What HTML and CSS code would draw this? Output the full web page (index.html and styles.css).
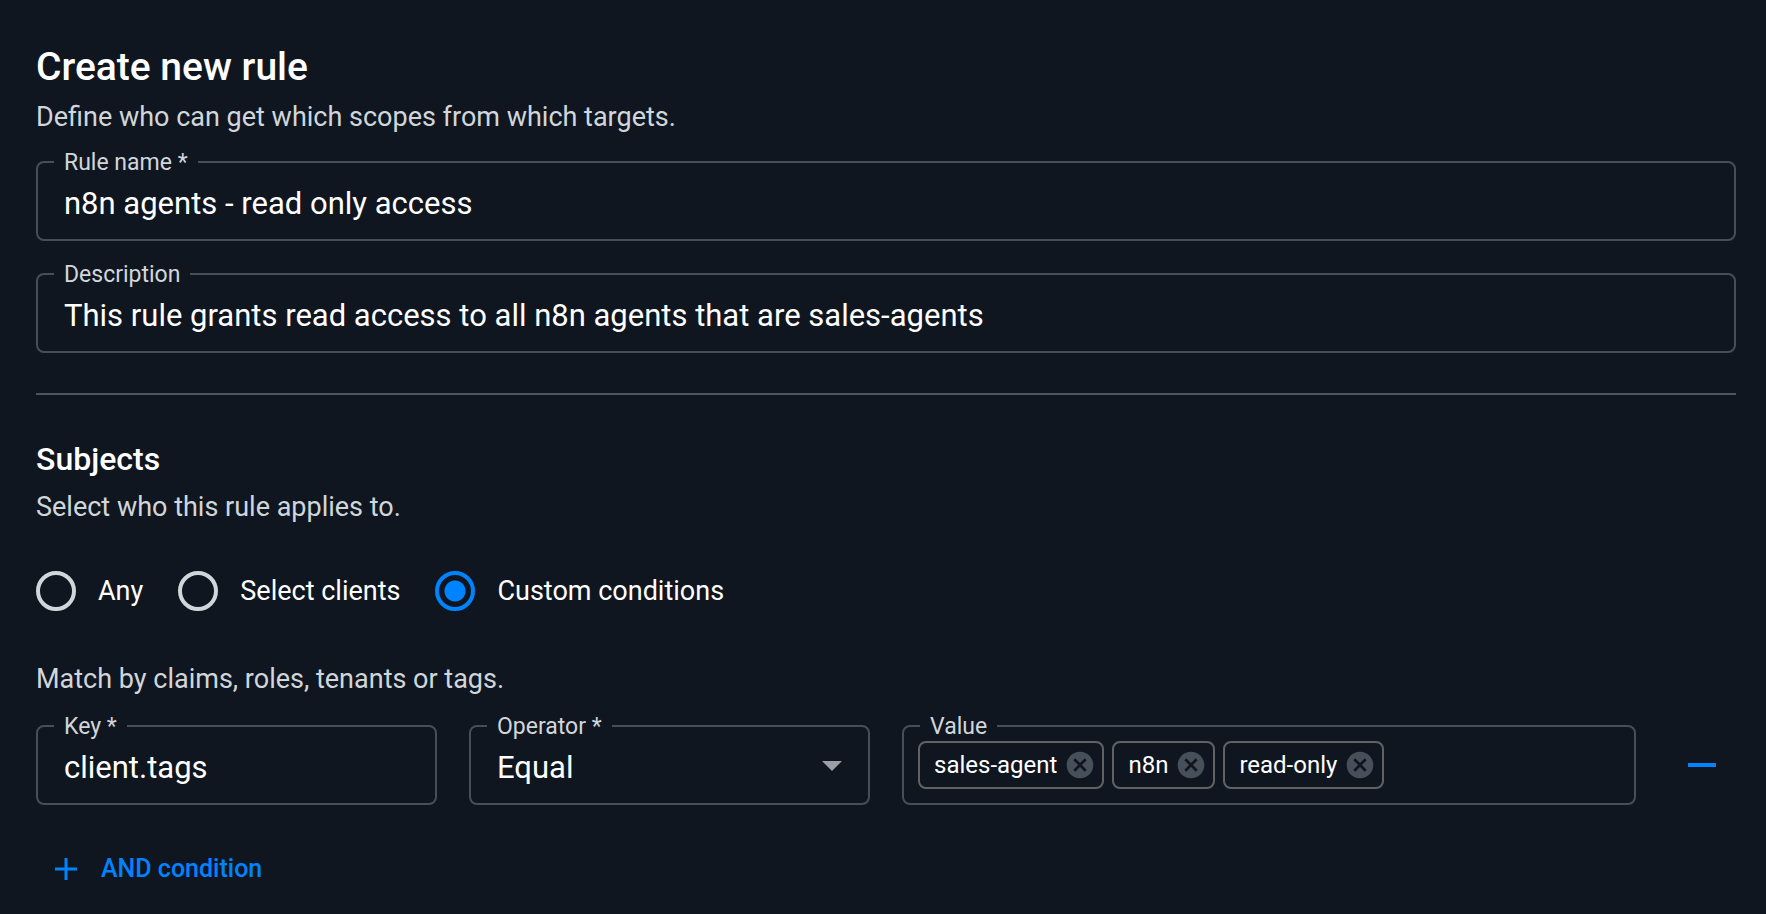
FILE: index.html
```html
<!DOCTYPE html>
<html lang="en">
<head>
<meta charset="utf-8">
<meta name="viewport" content="width=device-width, initial-scale=1">
<title>Create new rule</title>
<link rel="stylesheet" href="styles.css">
</head>
<body>
<main>
  <form class="rule-form">
    <header class="intro">
      <h1 class="title">Create new rule</h1>
      <p class="hint">Define who can get which scopes from which targets.</p>
    </header>

    <div class="fields">
      <div class="field">
        <label class="field-label" for="rule-name">Rule name *</label>
        <input class="field-control" id="rule-name" type="text" value="n8n agents - read only access" required>
      </div>
      <div class="field">
        <label class="field-label" for="description">Description</label>
        <input class="field-control" id="description" type="text" value="This rule grants read access to all n8n agents that are sales-agents">
      </div>
    </div>

    <hr class="divider">

    <section class="subjects">
      <h2 class="subtitle">Subjects</h2>
      <p class="hint">Select who this rule applies to.</p>

      <div class="radios" role="radiogroup" aria-label="Subjects">
        <label class="radio"><input class="radio-input" type="radio" name="subject">Any</label>
        <label class="radio"><input class="radio-input" type="radio" name="subject">Select clients</label>
        <label class="radio"><input class="radio-input" type="radio" name="subject" checked>Custom conditions</label>
      </div>

      <p class="hint">Match by claims, roles, tenants or tags.</p>

      <div class="condition">
        <div class="field">
          <label class="field-label" for="key">Key *</label>
          <input class="field-control" id="key" type="text" value="client.tags" required>
        </div>
        <div class="field">
          <label class="field-label" for="operator">Operator *</label>
          <select class="field-control" id="operator" required>
            <option selected>Equal</option>
          </select>
          <svg class="caret" viewBox="0 0 24 24" aria-hidden="true"><path d="M7 10l5 5 5-5z"/></svg>
        </div>
        <div class="field chips">
          <label class="field-label" for="value">Value</label>
          <span class="chip">sales-agent<button class="chip-remove" type="button" aria-label="Remove sales-agent"><svg class="chip-icon" viewBox="0 0 24 24"><path d="M12 2C6.47 2 2 6.47 2 12s4.47 10 10 10 10-4.47 10-10S17.53 2 12 2zm5 13.59L15.59 17 12 13.41 8.41 17 7 15.59 10.59 12 7 8.41 8.41 7 12 10.59 15.59 7 17 8.41 13.41 12 17 15.59z"/></svg></button></span>
          <span class="chip">n8n<button class="chip-remove" type="button" aria-label="Remove n8n"><svg class="chip-icon" viewBox="0 0 24 24"><path d="M12 2C6.47 2 2 6.47 2 12s4.47 10 10 10 10-4.47 10-10S17.53 2 12 2zm5 13.59L15.59 17 12 13.41 8.41 17 7 15.59 10.59 12 7 8.41 8.41 7 12 10.59 15.59 7 17 8.41 13.41 12 17 15.59z"/></svg></button></span>
          <span class="chip">read-only<button class="chip-remove" type="button" aria-label="Remove read-only"><svg class="chip-icon" viewBox="0 0 24 24"><path d="M12 2C6.47 2 2 6.47 2 12s4.47 10 10 10 10-4.47 10-10S17.53 2 12 2zm5 13.59L15.59 17 12 13.41 8.41 17 7 15.59 10.59 12 7 8.41 8.41 7 12 10.59 15.59 7 17 8.41 13.41 12 17 15.59z"/></svg></button></span>
          <input class="chip-input" id="value" type="text">
        </div>
        <button class="remove" type="button" aria-label="Remove condition">
          <svg class="remove-icon" viewBox="0 0 48 48"><path d="M10 22h28v4H10z"/></svg>
        </button>
      </div>

      <button class="add" type="button">
        <svg class="add-icon" viewBox="0 0 22 22" aria-hidden="true"><path d="M11 0v22M0 11h22"/></svg>
        AND condition
      </button>
    </section>
  </form>
</main>
</body>
</html>
```
FILE: styles.css
```css
:root {
  --bg: #0f1620;
  --text: #ffffff;
  --muted: #d1d6db;
  --line: #484d57;
  --accent: #0083ff;
}

* {
  box-sizing: border-box;
}

body {
  min-height: 100vh;
  margin: 0;
  background: var(--bg);
  color: var(--text);
  font-family: Roboto, "Liberation Sans", sans-serif;
  font-size: 27px;
  line-height: 40px;
}

button,
input,
select {
  margin: 0;
  font: inherit;
  color: inherit;
}

button {
  padding: 0;
  border: 0;
  background: none;
  cursor: pointer;
}

.rule-form {
  padding: 43px 30px 16px 36px;
}

.title {
  margin: 0 0 6px;
  font-size: 39px;
  font-weight: 500;
  line-height: 48px;
}

.hint {
  margin: 0;
  color: var(--muted);
}

.fields {
  display: grid;
  gap: 32px;
  padding-top: 24px;
}

.field {
  position: relative;
  min-width: 0;
  height: 80px;
  border: 2px solid var(--line);
  border-radius: 8px;
}

.field-label {
  position: absolute;
  top: -12px;
  left: 16px;
  padding: 0 10px;
  background: var(--bg);
  color: var(--muted);
  font-size: 23px;
  line-height: 24px;
  white-space: nowrap;
}

.field-control {
  display: block;
  width: 100%;
  height: 100%;
  padding: 5px 26px 0;
  border: 0;
  background: none;
  font-size: 31px;
  outline: 0;
  appearance: none;
}

.divider {
  height: 2px;
  margin: 40px 0;
  border: 0;
  background: #4a5664;
}

.subtitle {
  margin: 0 0 4px;
  font-size: 32px;
  font-weight: 500;
  line-height: 48px;
}

.radios {
  display: flex;
  gap: 35px;
  margin: 44px 0 48px;
}

.radio {
  display: flex;
  align-items: center;
  gap: 22px;
}

.radio-input {
  width: 40px;
  height: 40px;
  border: 4px solid var(--muted);
  border-radius: 50%;
  appearance: none;
}

.radio-input:checked {
  border-color: var(--accent);
  background: radial-gradient(circle, var(--accent) 10px, transparent 11px);
}

.condition {
  display: grid;
  grid-template-columns: 401fr 401fr 734fr 68px;
  gap: 32px;
  padding-top: 26px;
}

.caret {
  position: absolute;
  top: 14px;
  right: 12px;
  width: 48px;
  height: 48px;
  fill: #9b9fa5;
  pointer-events: none;
}

.chips {
  display: flex;
  align-items: center;
  gap: 8px;
  padding: 0 14px;
}

.chip {
  display: flex;
  align-items: center;
  gap: 7px;
  height: 48px;
  padding: 0 6px 0 14px;
  border: 2px solid #616264;
  border-radius: 8px;
  font-size: 24px;
  white-space: nowrap;
}

.chip-remove,
.chip-icon {
  display: block;
  width: 32px;
  height: 32px;
}

.chip-icon {
  fill: #474f5a;
}

.chip-input {
  flex: 1;
  min-width: 0;
  border: 0;
  background: none;
  outline: 0;
}

.remove {
  display: grid;
  place-items: center;
}

.remove-icon {
  width: 48px;
  height: 48px;
  fill: var(--accent);
}

.add {
  display: flex;
  align-items: center;
  gap: 24px;
  margin-top: 44px;
  padding: 0 19px;
  color: var(--accent);
  font-size: 25px;
  font-weight: 500;
}

.add-icon {
  width: 22px;
  height: 22px;
  fill: none;
  stroke: var(--accent);
  stroke-width: 3;
}
```
